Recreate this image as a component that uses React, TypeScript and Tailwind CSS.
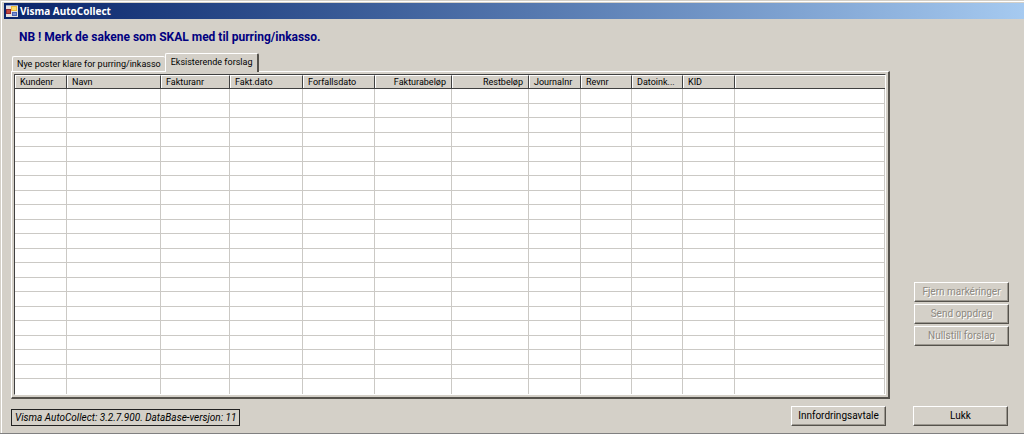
import { useState } from "react";
import clsx from "clsx";

type Column = {
  label: string;
  width: string;
  right?: boolean;
};

const columns: Column[] = [
  { label: "Kundenr", width: "w-[52px]" },
  { label: "Navn", width: "w-[94px]" },
  { label: "Fakturanr", width: "w-[69px]" },
  { label: "Fakt.dato", width: "w-[73px]" },
  { label: "Forfallsdato", width: "w-[72px]" },
  { label: "Fakturabeløp", width: "w-[77px]", right: true },
  { label: "Restbeløp", width: "w-[77px]", right: true },
  { label: "Journalnr", width: "w-[52px]" },
  { label: "Revnr", width: "w-[51px]" },
  { label: "Datoink...", width: "w-[51px]" },
  { label: "KID", width: "w-[52px]" },
];

const tabs = ["Nye poster klare for purring/inkasso", "Eksisterende forslag"];

const ROW_COUNT = 21;

function AppIcon() {
  return (
    <svg viewBox="0 0 12 12" className="h-3 w-3 shrink-0" aria-hidden="true">
      <rect width="12" height="12" fill="#e6e2de" />
      <rect x="0" y="0" width="12" height="1" fill="#8fa3d0" />
      <rect x="0" y="4" width="5" height="5" fill="#9c2a30" />
      <rect x="1" y="5" width="3" height="3" fill="#c04a40" />
      <rect x="5" y="1" width="6" height="5" fill="#ecba38" />
      <rect x="6" y="2" width="4" height="3" fill="#fadc70" />
      <rect x="6" y="7" width="5" height="4" fill="#4a62b4" />
      <rect x="7" y="8" width="3" height="2" fill="#7c92d4" />
    </svg>
  );
}

function PushButton({ label, disabled }: { label: string; disabled?: boolean }) {
  return (
    <button
      type="button"
      disabled={disabled}
      className={clsx(
        "h-5 w-[95px] shrink-0 border border-t-white border-l-white border-r-[#55524c] border-b-[#55524c] bg-[#d4d0c8] text-center text-[10px] leading-[18px] whitespace-nowrap shadow-[inset_-1px_-1px_0_#9b978f]",
        disabled ? "text-[#8d8981] [text-shadow:1px_1px_0_#fff]" : "text-black"
      )}
    >
      {label}
    </button>
  );
}

function ProposalTable() {
  return (
    <table className="w-full table-fixed border-separate border-spacing-0 bg-white text-[9px]">
      <thead>
        <tr className="h-[14px] bg-[#d4d0c8]">
          {columns.map((col) => (
            <th
              key={col.label}
              className={clsx(
                "h-[14px] border-t border-r border-b border-t-white border-r-[#404040] border-b-[#404040] px-[5px] py-0 leading-3 font-normal whitespace-nowrap shadow-[inset_1px_0_0_#fff]",
                col.width,
                col.right ? "text-right" : "text-left"
              )}
            >
              {col.label}
            </th>
          ))}
          <td className="border-t border-b border-t-white border-b-[#404040] p-0 shadow-[inset_1px_0_0_#fff]" />
        </tr>
      </thead>
      <tbody>
        {Array.from({ length: ROW_COUNT }, (_, row) => (
          <tr key={row} className="h-[14px] odd:h-[15px]">
            {columns.map((col) => (
              <td key={col.label} className={clsx("border-r border-[#cbc9c5] p-0", row < ROW_COUNT - 1 && "border-b")} />
            ))}
            <td className={clsx("border-r border-[#cbc9c5] p-0", row < ROW_COUNT - 1 && "border-b")} />
          </tr>
        ))}
      </tbody>
    </table>
  );
}

export default function App() {
  const [activeTab, setActiveTab] = useState(1);

  return (
    <div className="border-b border-[#808080] bg-[#d4d0c8] pt-px pl-px font-['Roboto',sans-serif] text-black">
      <div className="border-t border-l border-white pt-px pl-0.5">
        <header className="flex h-4 items-center gap-0.5 bg-linear-to-r from-[#0a246a] to-[#a6caf0] pl-0.5">
          <AppIcon />
          <h1 className="font-['Noto_Sans',sans-serif] text-[10px] leading-4 font-bold text-white">Visma AutoCollect</h1>
        </header>

        <div className="flex">
          <main className="min-w-0 flex-1 pl-[7px]">
            <p className="pt-2.5 pl-2 text-[12px] leading-4 font-bold text-[#000080]">
              NB ! Merk de sakene som SKAL med til purring/inkasso.
            </p>

            {/* Tab strip */}
            <div role="tablist" className="flex h-[26px] items-end pl-px text-[9px]">
              {tabs.map((tab, i) => (
                <button
                  key={tab}
                  type="button"
                  role="tab"
                  aria-selected={activeTab === i}
                  onClick={() => setActiveTab(i)}
                  className={clsx(
                    "rounded-t-xs border-t border-l border-white leading-[14px] whitespace-nowrap",
                    activeTab === i
                      ? "z-10 -mb-px h-[19px] border-r-2 border-r-[#55524c] bg-[#d4d0c8] px-[5px] pb-0.5"
                      : "h-[15px] px-1"
                  )}
                >
                  {tab}
                </button>
              ))}
            </div>

            <div className="border-t border-r-2 border-b-2 border-l border-t-white border-r-[#55524c] border-b-[#55524c] border-l-white p-0.5">
              <div className="border border-t-[#404040] border-r-white border-b-white border-l-[#404040]">
                <ProposalTable />
              </div>
            </div>
          </main>

          <aside className="flex w-[134px] shrink-0 flex-col items-end justify-end gap-[2px] pr-[15px] pb-[53px]">
            <PushButton label="Fjern markéringer" disabled />
            <PushButton label="Send oppdrag" disabled />
            <PushButton label="Nullstill forslag" disabled />
          </aside>
        </div>

        <footer className="flex items-start pt-[7px] pr-4 pb-[7px] pl-[7px]">
          <p className="mt-[3px] border border-[#222] px-[3px] text-[10px] leading-[15px] italic">
            Visma AutoCollect: 3.2.7.900. DataBase-versjon: 11
          </p>
          <div className="ml-auto flex gap-[27px]">
            <PushButton label="Innfordringsavtale" />
            <PushButton label="Lukk" />
          </div>
        </footer>
      </div>
    </div>
  );
}
